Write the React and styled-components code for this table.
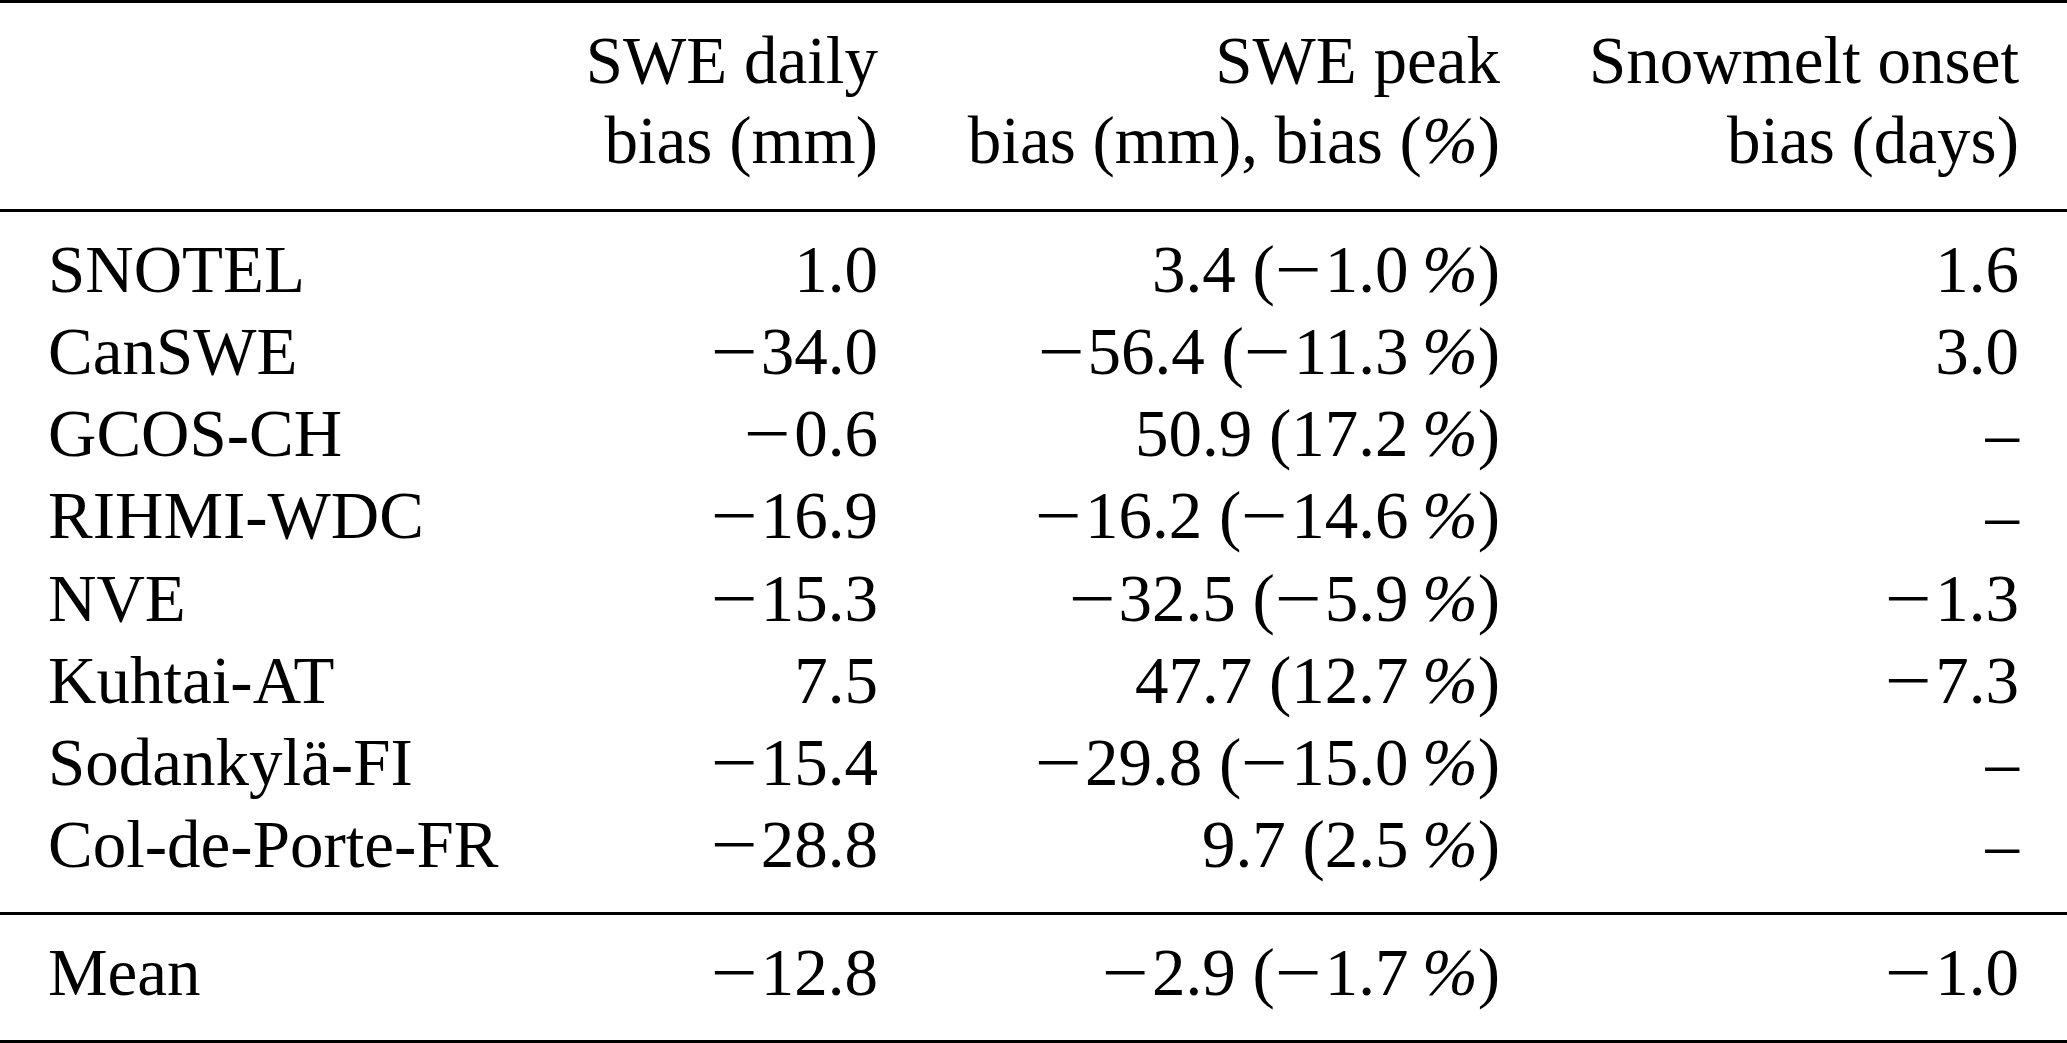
import React from 'react';
import styled, { createGlobalStyle } from 'styled-components';

const GlobalStyle = createGlobalStyle`
  html, body {
    margin: 0;
    padding: 0;
    background: #ffffff;
  }
  body {
    font-family: "Liberation Serif", "Times New Roman", serif;
    color: #000000;
  }
`;

// --- Table frame (booktabs style rules) ---
const Table = styled.div`
  width: 2067px;
  border-top: 3px solid #000;
  border-bottom: 3px solid #000;
  font-size: 67px;
  font-family: "Liberation Serif", "Times New Roman", serif;
  color: #000;
`;

const Section = styled.div`
  padding: ${(p) => p.$pad};
  border-top: ${(p) => (p.$ruled ? '3px solid #000' : 'none')};
`;

const HeaderSection = styled(Section)`
  border-bottom: 3px solid #000;
`;

const Row = styled.div`
  display: grid;
  grid-template-columns: 400px 430px 622px 519px;
  padding: 0 48px;
  line-height: ${(p) => p.$lh || '82.14px'};
  white-space: nowrap;
`;

const Cell = styled.div`
  text-align: ${(p) => (p.$left ? 'left' : 'right')};
`;

const Minus = styled.span`
  display: inline-block;
  transform: scaleX(1.24);
  transform-origin: left center;
  margin-right: 0.18em;
`;

const Pct = styled.span`
  font-style: italic;
`;

// turns "−" into a wider math minus and "%" into the slanted percent
const num = (str) => {
  const out = [];
  let key = 0;
  for (const ch of str) {
    if (ch === '−') out.push(<Minus key={key++}>−</Minus>);
    else if (ch === '%') out.push(<Pct key={key++}>%</Pct>);
    else if (typeof out[out.length - 1] === 'string') out[out.length - 1] += ch;
    else out.push(ch);
  }
  return out;
};

const rows = [
  ['SNOTEL', '1.0', '3.4 (−1.0\u2009%)', '1.6'],
  ['CanSWE', '−34.0', '−56.4 (−11.3\u2009%)', '3.0'],
  ['GCOS-CH', '−0.6', '50.9 (17.2\u2009%)', '–'],
  ['RIHMI-WDC', '−16.9', '−16.2 (−14.6\u2009%)', '–'],
  ['NVE', '−15.3', '−32.5 (−5.9\u2009%)', '−1.3'],
  ['Kuhtai-AT', '7.5', '47.7 (12.7\u2009%)', '−7.3'],
  ['Sodankylä-FI', '−15.4', '−29.8 (−15.0\u2009%)', '–'],
  ['Col-de-Porte-FR', '−28.8', '9.7 (2.5\u2009%)', '–'],
];

const DataRow = ({ cells }) => (
  <Row>
    <Cell $left>{cells[0]}</Cell>
    <Cell>{num(cells[1])}</Cell>
    <Cell>{num(cells[2])}</Cell>
    <Cell>{num(cells[3])}</Cell>
  </Row>
);

const App = () => (
  <>
    <GlobalStyle />
    <Table>
      <HeaderSection $pad="16.8px 0 28.3px">
        <Row $lh="80.6px">
          <Cell $left />
          <Cell>SWE daily<br />bias (mm)</Cell>
          <Cell>SWE peak<br />bias (mm), bias ({num('%')})</Cell>
          <Cell>Snowmelt onset<br />bias (days)</Cell>
        </Row>
      </HeaderSection>

      <Section $pad="15.7px 0 27px">
        {rows.map((r) => (
          <DataRow key={r[0]} cells={r} />
        ))}
      </Section>

      <Section $ruled $pad="15.9px 0 26.9px">
        <DataRow cells={['Mean', '−12.8', '−2.9 (−1.7\u2009%)', '−1.0']} />
      </Section>
    </Table>
  </>
);

export default App;
